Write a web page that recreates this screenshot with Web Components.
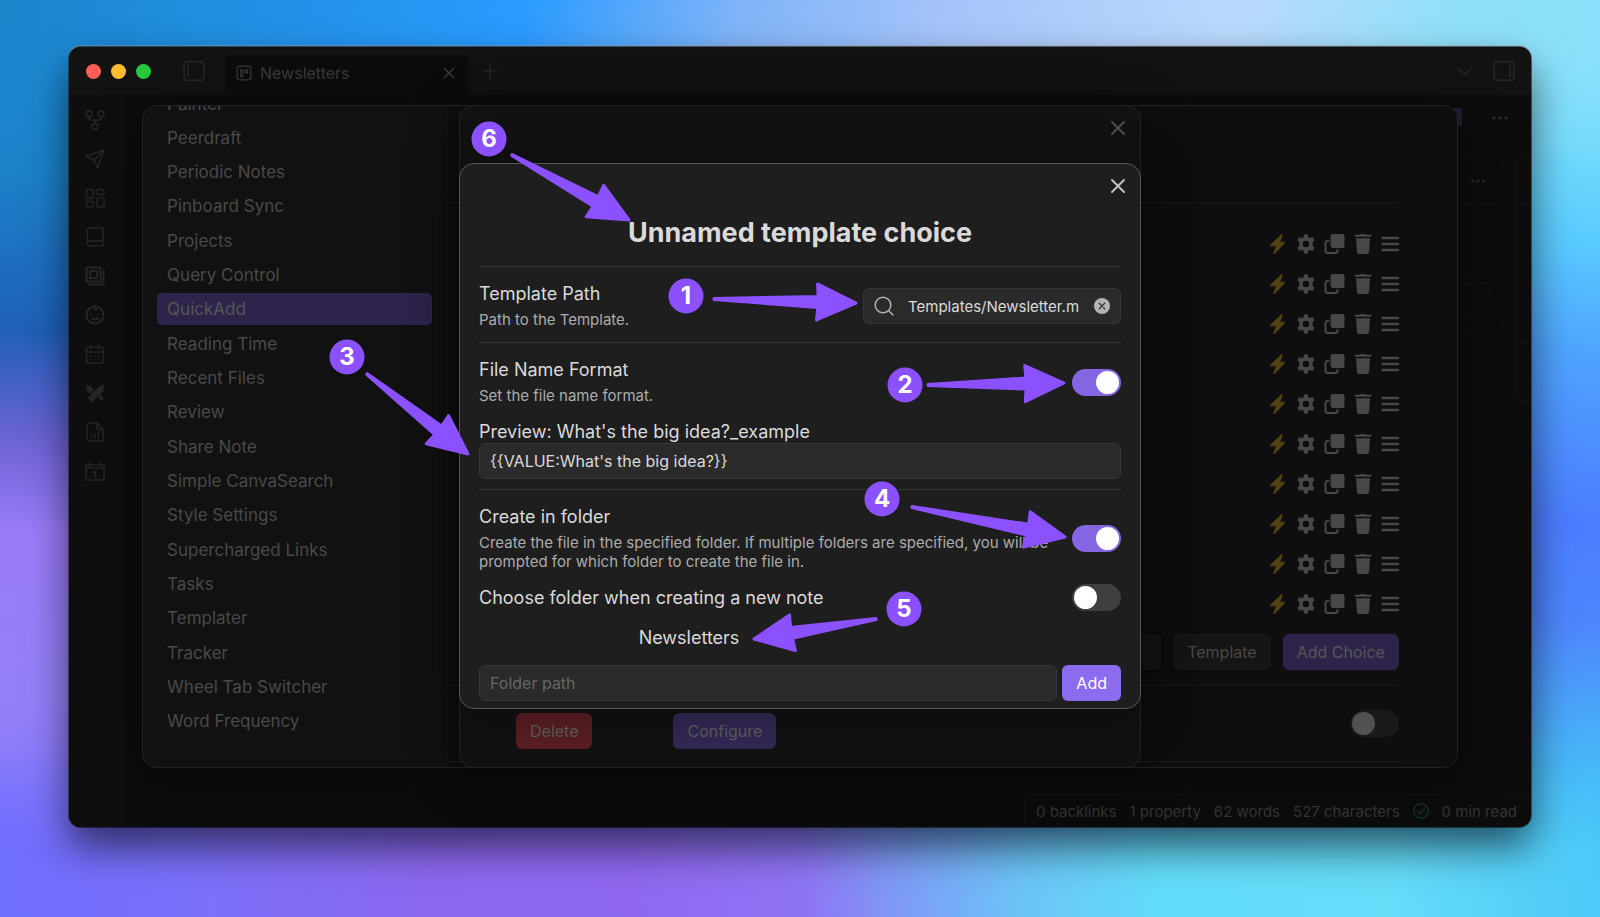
<!DOCTYPE html>
<html lang="en">
<head>
<meta charset="utf-8">
<title>Newsletters</title>
<style>
    html {
        height: 100%;
    }

    body {
        box-sizing: border-box;
        display: flex;
        min-height: 100%;
        margin: 0;
        padding: 47px 69px 90px;
        font-family: Inter, "Liberation Sans", sans-serif;
        font-size: 17px;
        color: #dadada;
    }
</style>
</head>
<body>
<desktop-wallpaper></desktop-wallpaper>
<app-window>
    <title-bar slot="title"></title-bar>
    <side-ribbon slot="ribbon"></side-ribbon>
    <board-view></board-view>
    <status-bar slot="status"></status-bar>

    <modal-dialog slot="modal" class="settings">
        <settings-panel></settings-panel>
    </modal-dialog>

    <modal-dialog slot="modal" class="macros" closable>
        <macro-actions></macro-actions>
    </modal-dialog>

    <modal-dialog slot="modal" class="choice" closable active>
        <template-choice></template-choice>
    </modal-dialog>

    <callout-layer slot="modal"></callout-layer>
</app-window>

<script>
const icons = {
    graph: '<circle cx="4" cy="4" r="3"/><circle cx="16" cy="4" r="3"/><circle cx="10" cy="16.500" r="3"/><path d="M4 7v1.500a1.500 1.500 0 0 0 1.500 1.500h9a1.500 1.500 0 0 0 1.500-1.500V7M10 10v3.500"/>',
    send: '<path d="M19 1 12.500 19 9 11 1 7.500zM19 1 9 11"/>',
    dashboard: '<rect x="1.500" y="1.500" width="7" height="8.500" rx="1"/><rect x="12" y="1.500" width="7" height="5" rx="1"/><rect x="12" y="10" width="7" height="9" rx="1"/><rect x="1.500" y="13.500" width="7" height="5.500" rx="1"/>',
    book: '<path d="M18 14H4.500a2 2 0 0 0-2 2v1a2 2 0 0 0 2 2H18V1H4.500a2 2 0 0 0-2 2v13"/>',
    frames: '<path stroke-width="2" d="M1.500 1.500h14v14h-14zM5 5h7v7H5zM18.500 5v13.500H4"/>',
    baby: '<circle cx="10" cy="10" r="8.500" stroke-width="2"/><path stroke-width="2" d="M10 1.500c2 1 1.500 4-.5 3.500M6.500 9h.1M13.400 9h.1M7 13c1.500 1.800 4.500 1.800 6 0"/>',
    calendar: '<rect x="1.500" y="3" width="17" height="16" rx="2"/><path d="M6 1v4M14 1v4M1.500 8h17M6 12h.1M10 12h.1M14 12h.1M6 15.500h.1M10 15.500h.1M14 15.500h.1"/>',
    tools: '<g fill="currentColor" stroke="none"><path d="m1 2 5 1 3 4-4 4-3-3z"/><path d="M18.500 1.500c1 4 0 6.500-2 8.500L7 19l-4.500-4L12 5.500c2-2 3.500-3.500 6.500-4z"/><path d="m13 12.500 2-1.500 4 4.500-3 3z"/></g>',
    report: '<path d="M12 1H4a2 2 0 0 0-2 2v14a2 2 0 0 0 2 2h12a2 2 0 0 0 2-2V7zM12 1v6h6M6.500 15.500v-1.500M10 15.500v-4M13.500 15.500v-6"/>',
    today: '<path d="M1 4h18v15H1zM1 7h18M5 1v4M15 1v4M8.500 11.500l2-1V16.500"/>',
    kanban: '<rect x="1.500" y="1.500" width="17" height="17" rx="2.500"/><path d="M6 6h2.500v8.500H6zM12 6h2.500v4H12z"/>',
    panelLeft: '<rect x="1" y="1.500" width="18" height="17" rx="3"/><path d="M4.500 5v10"/>',
    panelRight: '<rect x="1" y="1.500" width="18" height="17" rx="3"/><path d="M15.500 5v10"/>',
    close: '<path stroke-width="1.900" d="m4 4 12 12M16 4 4 16"/>',
    plus: '<path d="M10 3v14M3 10h14"/>',
    chevron: '<path d="m4 7.500 6 6 6-6"/>',
    dots: '<g fill="currentColor" stroke="none"><circle cx="4" cy="10" r="1.700"/><circle cx="10" cy="10" r="1.700"/><circle cx="16" cy="10" r="1.700"/></g>',
    search: '<circle cx="9" cy="9" r="7.800"/><path d="m15 15 4 4"/>',
    clear: '<circle cx="10" cy="10" r="10" fill="currentColor" stroke="none"/><path d="m6.500 6.500 7 7M13.500 6.500l-7 7" stroke="#242424"/>',
    check: '<circle cx="10" cy="10" r="9"/><path d="m6 10.500 3 3 5.500-6"/>',
    bolt: '<path fill="currentColor" stroke="none" d="M14.500.3c.6-.5 1.500 0 1.200.9L13.200 7.800h3.700c.9 0 1.300 1.100.6 1.700L7.700 19.700c-.7.500-1.600 0-1.200-.9l2.600-6.600H4.200c-.9 0-1.300-1.100-.6-1.700z"/>',
    gear: '<path fill="currentColor" stroke="none" fill-rule="evenodd" transform="translate(1)" d="M8.300.5C9.400.2 10.600.2 11.700.5l.6 2.600c.7.200 1.300.6 1.900 1l2.600-.8c.8.900 1.400 1.900 1.800 3l-2 1.900a8 8 0 0 1 0 3.600l2 1.900c-.4 1.100-1 2.100-1.800 3l-2.600-.8c-.6.400-1.200.8-1.900 1l-.6 2.600c-1.100.3-2.300.3-3.400 0l-.6-2.600c-.7-.2-1.300-.6-1.900-1l-2.600.8c-.8-.9-1.400-1.900-1.800-3l2-1.900a8 8 0 0 1 0-3.600l-2-1.900c.4-1.100 1-2.100 1.800-3l2.600.8c.6-.4 1.200-.8 1.900-1zM10 6.800a3.200 3.200 0 1 0 0 6.400 3.200 3.200 0 0 0 0-6.400z"/>',
    copy: '<rect x="7.500" y="0" width="14" height="14" rx="2.500" fill="currentColor" stroke="none"/><path stroke-width="2" d="M5.500 7H4.500a2 2 0 0 0-2 2v8a2 2 0 0 0 2 2h8a2 2 0 0 0 2-2v-1"/>',
    trash: '<path fill="currentColor" stroke="none" d="M9 .8 9.600 0h4.800l.6.800h4.400c.6 0 1.100.4 1.100 1s-.5 1-1.100 1H4.600c-.6 0-1.100-.4-1.100-1s.5-1 1.100-1zM5 4.200h14l-.9 13.900c-.1 1.100-.9 1.900-2 1.900H7.900c-1.100 0-1.900-.8-2-1.900z"/>',
    menu: '<path stroke-width="2.400" d="M3.500 4h15.500M3.500 10h15.500M3.500 16h15.500"/>'
};

function createTemplate(html) {
    const template = document.createElement('template');
    template.innerHTML = html;
    return template.content.cloneNode(true);
}

class BaseElement extends HTMLElement {
    connectedCallback() {
        if (this.shadowRoot) {
            return;
        }
        this.attachShadow({ mode: 'open' });
        this.shadowRoot.append(createTemplate(this.render()));
    }
}

const buttonStyle = `
    button {
        padding: 0 14px;
        height: 36px;
        border: 0;
        border-radius: 6px;
        font: inherit;
        font-size: 16px;
    }
`;

const toggleStyle = `
    input[type=checkbox] {
        appearance: none;
        flex: none;
        box-sizing: border-box;
        width: 49px;
        height: 27px;
        margin: 0;
        padding: 2px;
        border-radius: 14px;
        background: var(--track, #3f3f3f);
    }

    input[type=checkbox]::before {
        content: "";
        display: block;
        width: 23px;
        height: 23px;
        border-radius: 50%;
        background: var(--knob, #fff);
    }

    input[type=checkbox]:checked {
        background: #8465e2;
    }

    input[type=checkbox]:checked::before {
        margin-left: 22px;
    }
`;

class UiIcon extends BaseElement {
    render() {
        return `
    <style>
        :host {
            display: block;
            flex: none;
            width: 20px;
            height: 20px;
        }

        svg {
            display: block;
            width: 100%;
            height: 100%;
            overflow: visible;
        }
    </style>
    <svg viewBox="0 0 20 20" fill="none" stroke="currentColor" stroke-width="1.5" stroke-linecap="round" stroke-linejoin="round" aria-hidden="true">${icons[this.getAttribute('name')]}</svg>
  `;
    }
}

class DesktopWallpaper extends BaseElement {
    render() {
        return `
    <style>
        :host, div {
            position: absolute;
            inset: 0;
        }

        :host {
            z-index: -1;
            overflow: hidden;
        }

        .left {
            background: linear-gradient(#1b88cf 0%, #1c82ca 18%, #1f60b8 36%, #6d63d4 48%, #9a7cf8 58%, #9580f8 76%, #6f6eff 100%);
        }

        .right {
            background: linear-gradient(#86e2fe 0%, #72dafc 16%, #5accff 26%, #4fa5ff 38%, #4c7cff 57%, #4e86fd 68%, #48b4f8 82%, #43c4f9 100%);
            mask-image: linear-gradient(90deg, transparent 30%, #000 96%);
        }

        .top {
            background: linear-gradient(100deg, #1b86cc 0%, #2391e8 17%, #2b9bff 30%, #7fb4f8 42%, #a5c4fa 54%, #bad9fc 70%, #90e0f8 83%, #84e0fd 100%);
            mask-image: linear-gradient(#000 5%, transparent 18%);
        }

        .bottom {
            background: linear-gradient(85deg, #6f6eff 0%, #7c70fa 12%, #8c68f0 26%, #9068f0 38%, #8e74f5 48%, #7f98f6 53%, #6cc4f8 61%, #62dcf9 69%, #66dcf9 83%, #50ccf8 93%, #42c4f8 100%);
            mask-image: linear-gradient(transparent 82%, #000 93%);
        }
    </style>
    <div class="left"></div>
    <div class="right"></div>
    <div class="top"></div>
    <div class="bottom"></div>
  `;
    }
}

class AppWindow extends BaseElement {
    render() {
        return `
    <style>
        :host {
            position: relative;
            display: flex;
            flex: 1;
            flex-direction: column;
            border-radius: 12px;
            background: #0c0c0c;
            box-shadow: 0 0 0 1px rgba(0, 0, 0, .5), 0 -1px 0 1px rgba(160, 160, 160, .4), 0 20px 40px rgba(0, 0, 0, .6);
        }

        .body {
            display: flex;
            flex: 1;
        }

        main {
            position: relative;
            display: flex;
            flex: 1;
            flex-direction: column;
            min-width: 0;
        }

        /* every modal is stacked on the middle of the window */
        .stage {
            position: absolute;
            inset: -1px 0 1px;
            display: grid;
            place-items: center;
        }

        ::slotted([slot=modal]) {
            grid-area: 1 / 1;
            width: min(682px, 90%);
            height: 70%;
        }

        ::slotted(.settings) {
            width: 90%;
            height: 85%;
        }

        ::slotted(.macros) {
            height: 85%;
        }
    </style>
    <slot name="title"></slot>
    <div class="body">
        <slot name="ribbon"></slot>
        <main>
            <slot></slot>
            <slot name="status"></slot>
        </main>
    </div>
    <div class="stage"><slot name="modal"></slot></div>
  `;
    }
}

class TitleBar extends BaseElement {
    render() {
        return `
    <style>
        :host {
            display: flex;
            align-items: center;
            height: 48px;
            padding: 0 16px 0 17px;
            border-radius: 12px 12px 0 0;
            background: #121212;
            color: #262626;
        }

        .lights {
            display: flex;
            gap: 10px;
            margin-right: 32px;
        }

        .lights i {
            width: 15px;
            height: 15px;
            border-radius: 50%;
            background: #ff5f57;
        }

        .lights i:nth-child(2) {
            background: #febc2e;
        }

        .lights i:nth-child(3) {
            background: #28c840;
        }

        .panel {
            width: 22px;
            height: 22px;
        }

        .tab {
            display: flex;
            align-items: center;
            align-self: flex-end;
            box-sizing: border-box;
            width: 243px;
            height: 40px;
            margin: 0 12px 0 20px;
            padding: 0 11px 4px;
            border-radius: 6px 6px 0 0;
            background: #0c0c0c;
            color: #383838;
        }

        .tab span {
            flex: 1;
            padding-left: 8px;
            font-size: 16px;
        }

        .tab ui-icon {
            width: 16px;
            height: 16px;
        }

        .chevron {
            margin: 0 18px 0 auto;
        }
    </style>
    <div class="lights"><i></i><i></i><i></i></div>
    <ui-icon class="panel" name="panelLeft"></ui-icon>
    <div class="tab"><ui-icon name="kanban"></ui-icon><span>Newsletters</span><ui-icon name="close"></ui-icon></div>
    <ui-icon name="plus"></ui-icon>
    <ui-icon class="chevron" name="chevron"></ui-icon>
    <ui-icon class="panel" name="panelRight"></ui-icon>
  `;
    }
}

class SideRibbon extends BaseElement {
    render() {
        const names = ['graph', 'send', 'dashboard', 'book', 'frames', 'baby', 'calendar', 'tools', 'report', 'today'];
        return `
    <style>
        :host {
            display: flex;
            flex-direction: column;
            align-items: center;
            gap: 19px;
            width: 52px;
            padding-top: 15px;
            border-right: 1px solid #121212;
            border-bottom-left-radius: 12px;
            background: #0e0e0e;
            color: #262626;
        }
    </style>
    ${names.map((name) => `<ui-icon name="${name}"></ui-icon>`).join('')}
  `;
    }
}

class BoardView extends BaseElement {
    render() {
        return `
    <style>
        :host {
            display: flex;
            flex: 1;
            flex-direction: column;
            color: #2a2a2a;
        }

        header {
            display: flex;
            justify-content: flex-end;
            align-items: flex-start;
            gap: 28px;
            padding: 13px 21px 0 0;
        }

        .view {
            width: 40px;
            height: 18px;
            border-radius: 2px;
            background: #211c31;
        }

        .lanes {
            display: flex;
            justify-content: flex-end;
            align-items: flex-start;
            gap: 13px;
            margin-top: 30px;
        }

        .lane {
            box-sizing: border-box;
            width: 277px;
            height: 172px;
            overflow: hidden;
            border: 1px solid #121212;
            border-radius: 6px;
        }

        .lane + .lane {
            width: 16px;
            height: 243px;
            border-right: 0;
            border-radius: 6px 0 0 6px;
        }

        .head {
            display: flex;
            justify-content: flex-end;
            box-sizing: border-box;
            height: 46px;
            padding: 13px 14px;
            border-bottom: 1px solid #121212;
        }

        .head ui-icon {
            width: 18px;
            height: 18px;
        }

        .card {
            height: 67px;
            border-bottom: 1px solid #121212;
        }

        .lane + .lane .card {
            height: 138px;
        }

        .new {
            height: 34px;
            margin: 10px;
            border: 1px solid #121212;
            border-radius: 6px;
        }
    </style>
    <header><div class="view"></div><ui-icon name="dots"></ui-icon></header>
    <div class="lanes">
        <div class="lane">
            <div class="head"><ui-icon name="dots"></ui-icon></div>
            <div class="card"></div>
            <div class="new"></div>
        </div>
        <div class="lane">
            <div class="head"></div>
            <div class="card"></div>
        </div>
    </div>
  `;
    }
}

class StatusBar extends BaseElement {
    render() {
        return `
    <style>
        :host {
            display: flex;
            align-items: center;
            align-self: flex-end;
            gap: 13px;
            box-sizing: border-box;
            height: 33px;
            padding: 0 14px 0 11px;
            border-top: 1px solid #131313;
            border-left: 1px solid #131313;
            border-top-left-radius: 6px;
            color: #343434;
            font-size: 15px;
        }

        ui-icon {
            width: 16px;
            height: 16px;
            color: #143c1f;
        }
    </style>
    <span>0 backlinks</span>
    <span>1 property</span>
    <span>62 words</span>
    <span>527 characters</span>
    <ui-icon name="check"></ui-icon>
    <span>0 min read</span>
  `;
    }
}

class ModalDialog extends BaseElement {
    render() {
        const close = this.hasAttribute('closable')
            ? '<button aria-label="Close"><ui-icon name="close"></ui-icon></button>'
            : '';
        return `
    <style>
        :host {
            position: relative;
            display: flex;
            flex-direction: column;
            box-sizing: border-box;
            overflow: hidden;
            border: 1px solid #232323;
            border-radius: 15px;
            background: #111;
            box-shadow: 0 8px 50px rgba(0, 0, 0, .35);
            color: #4a4a4a;
        }

        :host([active]) {
            border-color: #565656;
            background: #1e1e1e;
            color: #dadada;
        }

        button {
            position: absolute;
            top: 12px;
            right: 12px;
            padding: 0;
            border: 0;
            background: none;
            color: #505050;
        }

        :host([active]) button {
            color: #c4c4c4;
        }
    </style>
    ${close}
    <slot></slot>
  `;
    }
}

class SettingsPanel extends BaseElement {
    render() {
        const plugins = ['Painter', 'Peerdraft', 'Periodic Notes', 'Pinboard Sync', 'Projects', 'Query Control',
            'QuickAdd', 'Reading Time', 'Recent Files', 'Review', 'Share Note', 'Simple CanvaSearch', 'Style Settings',
            'Supercharged Links', 'Tasks', 'Templater', 'Tracker', 'Wheel Tab Switcher', 'Word Frequency'];
        const link = (name) => `<a href="#"${name === 'QuickAdd' ? ' class="current"' : ''}>${name}</a>`;
        return `
    <style>
        ${buttonStyle}
        ${toggleStyle}

        :host {
            --track: #191919;
            --knob: #515151;
            display: flex;
            flex: 1;
            min-height: 0;
        }

        nav {
            display: flex;
            flex-direction: column;
            justify-content: space-between;
            box-sizing: border-box;
            width: 305px;
            /* scrolled a little, so the first entry is cut off */
            margin-top: -18px;
            padding: 0 15px 29px 14px;
            border-right: 1px solid #151515;
        }

        a {
            padding: 0 10px;
            border-radius: 5px;
            color: #494949;
            line-height: 32px;
            text-decoration: none;
        }

        a.current {
            background: #2e244b;
            color: #555;
        }

        section {
            flex: 1;
            padding-right: 58px;
            background: #0e0e0e;
        }

        .intro {
            height: 96px;
            border-bottom: 1px solid #181818;
        }

        .choices {
            padding: 21px 0 10px;
        }

        .choice {
            display: flex;
            justify-content: flex-end;
            align-items: center;
            gap: 8px;
            height: 40px;
            color: #474747;
        }

        .choice ui-icon:first-child {
            color: #544312;
        }

        .add {
            display: flex;
            justify-content: flex-end;
            gap: 12px;
            padding-bottom: 15px;
            border-bottom: 1px solid #181818;
        }

        .add button {
            background: #151515;
            box-shadow: inset 0 0 0 1px #181818, 0 1px 3px #080808;
            color: #484848;
        }

        .add button.primary {
            background: #2e244b;
            box-shadow: none;
            color: #575757;
        }

        .option {
            display: flex;
            justify-content: flex-end;
            padding: 24px 0;
            border-bottom: 1px solid #181818;
        }
    </style>
    <nav>${plugins.map(link).join('')}</nav>
    <section>
        <div class="intro"></div>
        <div class="choices"></div>
        <div class="add"><button aria-label="Name"></button><button>Template</button><button class="primary">Add Choice</button></div>
        <div class="option"><input type="checkbox" aria-label="Option"></div>
    </section>
  `;
    }

    connectedCallback() {
        super.connectedCallback();
        const choices = this.shadowRoot.querySelector('.choices');
        for (let i = 0; i < 10; i++) {
            const row = document.createElement('div');
            row.className = 'choice';
            row.innerHTML = ['bolt', 'gear', 'copy', 'trash', 'menu'].map((name) => `<ui-icon name="${name}"></ui-icon>`).join('');
            choices.append(row);
        }
    }
}

class MacroActions extends BaseElement {
    render() {
        return `
    <style>
        ${buttonStyle}

        :host {
            display: flex;
            gap: 81px;
            margin-top: auto;
            padding: 0 56px 18px;
        }

        button {
            background: #342957;
            color: #5f5f5f;
        }

        .delete {
            background: #5b1f22;
        }
    </style>
    <button class="delete">Delete</button>
    <button>Configure</button>
  `;
    }
}

class SettingRow extends BaseElement {
    render() {
        const name = this.getAttribute('name');
        const desc = this.getAttribute('desc');
        const toggle = this.getAttribute('toggle');
        const control = toggle
            ? `<input id="control" type="checkbox"${toggle === 'on' ? ' checked' : ''}>`
            : '<span class="search"><ui-icon name="search"></ui-icon><input id="control" type="text" value="Templates/Newsletter.m"><ui-icon class="clear" name="clear"></ui-icon></span>';
        return `
    <style>
        ${toggleStyle}

        :host {
            display: flex;
            align-items: center;
            gap: 18px;
            padding: 16px 0 13px;
            border-top: 1px solid #343434;
        }

        :host([plain]) {
            padding-top: 0;
            border-top: 0;
        }

        .info {
            flex: 1;
        }

        label {
            display: block;
            font-size: 18px;
            line-height: 22px;
        }

        p {
            margin: 5px 0 0;
            color: #acacac;
            font-size: 15px;
            line-height: 19px;
        }

        .search {
            display: flex;
            align-items: center;
            box-sizing: border-box;
            width: 258px;
            height: 36px;
            padding: 0 10px;
            border: 1px solid #363636;
            border-radius: 6px;
            background: #2a2a2a;
            color: #b3b3b3;
        }

        .search input {
            flex: 1;
            min-width: 0;
            margin: 0 4px 0 14px;
            padding: 0;
            border: 0;
            background: none;
            color: #dadada;
            font: inherit;
            font-size: 15px;
        }

        .clear {
            width: 16px;
            height: 16px;
        }
    </style>
    <div class="info">
        <label for="control">${name}</label>
        ${desc ? `<p>${desc}</p>` : ''}
    </div>
    ${control}
  `;
    }
}

class TextField extends BaseElement {
    render() {
        const label = this.getAttribute('label');
        const hidden = this.hasAttribute('hide-label');
        return `
    <style>
        :host {
            display: block;
            flex: 1;
        }

        label {
            display: block;
            font-size: 18px;
            line-height: 22px;
        }

        input {
            box-sizing: border-box;
            width: 100%;
            height: 36px;
            padding: 0 10px;
            border: 1px solid #363636;
            border-radius: 6px;
            background: #2a2a2a;
            color: #dadada;
            font: inherit;
            font-size: 16px;
            display: block;
        }

        input::placeholder {
            color: #666;
        }
    </style>
    ${hidden ? '' : `<label for="field">${label}</label>`}
    <input id="field" type="text" value="${this.getAttribute('value') || ''}" placeholder="${this.getAttribute('placeholder') || ''}"${hidden ? ` aria-label="${label}"` : ''}>
  `;
    }
}

class TemplateChoice extends BaseElement {
    render() {
        return `
    <style>
        ${buttonStyle}

        :host {
            display: block;
            padding: 0 19px;
        }

        h2 {
            margin: 50px 0 15px;
            font-size: 27px;
            font-weight: 700;
            line-height: 37px;
            text-align: center;
        }

        .format {
            margin: 3px 0 10px;
        }

        .folders {
            display: grid;
            grid-template-columns: 2fr 1fr;
            gap: 12px;
            justify-items: center;
            margin: 3px 0 16px;
            font-size: 18px;
            line-height: 22px;
        }

        .add {
            display: flex;
            gap: 5px;
        }

        button {
            background: #8b6cef;
            color: #fff;
        }
    </style>
    <h2>Unnamed template choice</h2>
    <setting-row name="Template Path" desc="Path to the Template."></setting-row>
    <setting-row name="File Name Format" desc="Set the file name format." toggle="on"></setting-row>
    <text-field class="format" label="Preview: What's the big idea?_example" value="{{VALUE:What's the big idea?}}"></text-field>
    <setting-row name="Create in folder" desc="Create the file in the specified folder. If multiple folders are specified, you will be prompted for which folder to create the file in." toggle="on"></setting-row>
    <setting-row plain name="Choose folder when creating a new note" toggle="off"></setting-row>
    <div class="folders"><span>Newsletters</span></div>
    <div class="add">
        <text-field hide-label label="Folder path" placeholder="Folder path"></text-field>
        <button>Add</button>
    </div>
  `;
    }
}

/* Numbered arrows, in pixels from the top left corner of the front modal. */
class CalloutLayer extends BaseElement {
    static marks = [
        { label: 1, badge: [227, 133], from: [255, 136], to: [397, 140] },
        { label: 2, badge: [446, 222], from: [469, 222], to: [605, 220] },
        { label: 3, badge: [-112, 194], from: [-92, 211], to: [9, 291] },
        { label: 4, badge: [423, 336], from: [453, 344], to: [606, 374] },
        { label: 5, badge: [445, 446], from: [417, 456], to: [295, 476] },
        { label: 6, badge: [30, -24], from: [53, -8], to: [170, 57] }
    ];

    arrow({ label, badge, from, to }) {
        const dx = to[0] - from[0];
        const dy = to[1] - from[1];
        const length = Math.hypot(dx, dy);
        const neck = length - 38;
        const angle = Math.atan2(dy, dx) * 180 / Math.PI;
        return `
        <path transform="translate(${from}) rotate(${angle})" d="M0-.5 ${neck}-5.500 ${neck - 1}-18 ${length} 0 ${neck - 1} 18 ${neck} 5.500 0 .5z"/>
        <circle cx="${badge[0]}" cy="${badge[1]}" r="16"/>
        <text x="${badge[0]}" y="${badge[1] + 8}">${label}</text>`;
    }

    render() {
        return `
    <style>
        :host {
            display: block;
            pointer-events: none;
            z-index: 1;
        }

        svg {
            display: block;
            width: 100%;
            height: 100%;
            overflow: visible;
            fill: #8b51ff;
            stroke: #8b51ff;
            stroke-width: 3;
            stroke-linejoin: round;
        }

        text {
            fill: #fff;
            stroke: none;
            font-size: 24px;
            font-weight: 700;
            text-anchor: middle;
        }
    </style>
    <svg>${CalloutLayer.marks.map((mark) => this.arrow(mark)).join('')}</svg>
  `;
    }
}

customElements.define('ui-icon', UiIcon);
customElements.define('desktop-wallpaper', DesktopWallpaper);
customElements.define('app-window', AppWindow);
customElements.define('title-bar', TitleBar);
customElements.define('side-ribbon', SideRibbon);
customElements.define('board-view', BoardView);
customElements.define('status-bar', StatusBar);
customElements.define('modal-dialog', ModalDialog);
customElements.define('settings-panel', SettingsPanel);
customElements.define('macro-actions', MacroActions);
customElements.define('setting-row', SettingRow);
customElements.define('text-field', TextField);
customElements.define('template-choice', TemplateChoice);
customElements.define('callout-layer', CalloutLayer);
</script>
</body>
</html>
